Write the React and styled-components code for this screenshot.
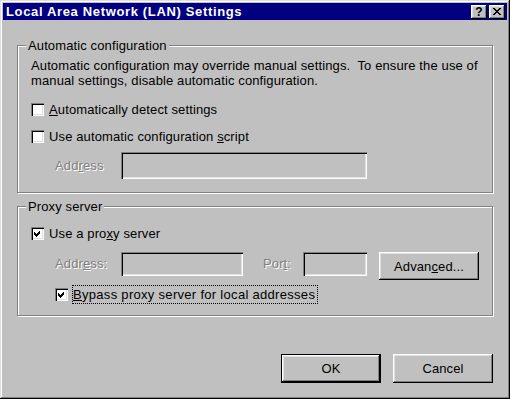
import React from "react";
import styled, { createGlobalStyle, css } from "styled-components";

const GlobalStyle = createGlobalStyle`
  html, body {
    margin: 0;
    padding: 0;
    background: #c0c0c0;
  }
  body {
    font-family: "Liberation Sans", Arial, sans-serif;
    font-size: 13px;
    letter-spacing: 0.12px;
    color: #000;
  }
`;

const raised = css`
  box-shadow: inset -1px -1px #000, inset 1px 1px #fff, inset -2px -2px #808080,
    inset 2px 2px #dfdfdf;
`;

const sunken = css`
  box-shadow: inset 1px 1px #808080, inset 2px 2px #000, inset -1px -1px #fff,
    inset -2px -2px #dfdfdf;
`;

const Dialog = () => {
  return (
    <>
      <GlobalStyle />
      <Window>
        <TitleBar>
          <Title>Local Area Network (LAN) Settings</Title>
          <TitleButtons>
            <TitleButton>
              <HelpGlyph>?</HelpGlyph>
            </TitleButton>
            <TitleButton>
              <svg width="8" height="7" viewBox="0 0 8 7" shapeRendering="crispEdges">
                <path d="M0 0h2l2 2.4 2-2.4h2l-3 3.5 3 3.5h-2l-2-2.4-2 2.4h-2l3-3.5z" fill="#000" />
              </svg>
            </TitleButton>
          </TitleButtons>
        </TitleBar>

        <Body>
          {/* 자동 구성 */}
          <Group $top={18}>
            <Legend>Automatic configuration</Legend>
            <GroupContent $top={5} $bottom={13}>
              <Desc>
                Automatic configuration may override manual settings.&nbsp; To ensure the use of
                <br />
                manual settings, disable automatic configuration.
              </Desc>
              <CheckRow $mt={13}>
                <CheckBox />
                <span>
                  <Key>A</Key>utomatically detect settings
                </span>
              </CheckRow>
              <CheckRow $mt={10}>
                <CheckBox />
                <span>
                  Use automatic configuration <Key>s</Key>cript
                </span>
              </CheckRow>
              <FieldRow $mt={7}>
                <FieldLabel $w={66} $h={27}>
                  Add<Key>r</Key>ess
                </FieldLabel>
                <TextBox $w={246} $h={27} />
              </FieldRow>
            </GroupContent>
          </Group>

          {/* 프록시 서버 */}
          <Group $top={6}>
            <Legend>Proxy server</Legend>
            <GroupContent $top={11} $bottom={11}>
              <CheckRow>
                <CheckBox $checked />
                <span>
                  Use a pro<Key>x</Key>y server
                </span>
              </CheckRow>
              <FieldRow $mt={10}>
                <FieldLabel $w={66} $h={24}>
                  Addr<Key>e</Key>ss:
                </FieldLabel>
                <TextBox $w={122} $h={24} />
                <FieldLabel $w={40} $h={24} $ml={20}>
                  Por<Key>t</Key>:
                </FieldLabel>
                <TextBox $w={64} $h={24} />
                <Button $ml={12} $h={28}>
                  Advan<Key>c</Key>ed...
                </Button>
              </FieldRow>
              <CheckRow $mt={5} $h={19} $indent={24} $gap={4}>
                <CheckBox $checked />
                <FocusLabel>
                  <Key>B</Key>ypass proxy server for local addresses
                </FocusLabel>
              </CheckRow>
            </GroupContent>
          </Group>

          <Footer>
            <Button $default $h={29}>OK</Button>
            <Button $h={29}>Cancel</Button>
          </Footer>
        </Body>
      </Window>
    </>
  );
};

const CheckBox = ({ $checked }) => (
  <Box>
    {$checked && (
      <svg width="13" height="13" viewBox="0 0 13 13" shapeRendering="crispEdges">
        <path d="M3 5L5 7L9 3V6L5 10L3 8Z" fill="#000" />
      </svg>
    )}
  </Box>
);

export default Dialog;

//창 전체
const Window = styled.div`
  width: 510px;
  height: 399px;
  box-sizing: border-box;
  padding: 3px;
  display: flex;
  flex-direction: column;
  background: #c0c0c0;
  box-shadow: inset -1px -1px #000, inset 1px 1px #dfdfdf, inset -2px -2px #808080,
    inset 2px 2px #fff;
`;

//제목 표시줄
const TitleBar = styled.div`
  height: 17px;
  display: flex;
  align-items: center;
  padding: 0 2px 0 3px;
  background: #000080;
  color: #fff;
`;

const Title = styled.div`
  flex: 1;
  font-weight: bold;
  font-size: 13px;
  letter-spacing: 0.65px;
  line-height: 17px;
  white-space: nowrap;
`;

const TitleButtons = styled.div`
  display: flex;
  gap: 2px;
`;

const TitleButton = styled.div`
  width: 16px;
  height: 14px;
  display: flex;
  align-items: center;
  justify-content: center;
  background: #c0c0c0;
  ${raised}
`;

const HelpGlyph = styled.span`
  color: #000;
  font-weight: bold;
  font-size: 12px;
  line-height: 14px;
`;

const Body = styled.div`
  display: flex;
  flex-direction: column;
  padding: 0 14px;
`;

//그룹 박스
const Group = styled.fieldset`
  margin: ${(p) => p.$top}px 0 0;
  padding: 0;
  min-width: 0;
  border: 1px solid #808080;
  box-shadow: 1px 1px 0 #fff, inset 1px 1px 0 #fff;
`;

const Legend = styled.legend`
  margin-left: 8px;
  padding: 0 2px;
  line-height: 15px;
  background: #c0c0c0;
`;

const GroupContent = styled.div`
  display: flex;
  flex-direction: column;
  padding: ${(p) => p.$top}px 13px ${(p) => p.$bottom}px;
`;

const Desc = styled.div`
  line-height: 15px;
  white-space: nowrap;
`;

const Key = styled.span`
  text-decoration: underline;
`;

const CheckRow = styled.div`
  display: flex;
  align-items: center;
  gap: ${(p) => p.$gap ?? 5}px;
  height: ${(p) => p.$h ?? 17}px;
  margin-top: ${(p) => p.$mt ?? 0}px;
  padding-left: ${(p) => p.$indent ?? 0}px;
  white-space: nowrap;
`;

const Box = styled.span`
  width: 13px;
  height: 13px;
  flex: none;
  display: flex;
  background: #fff;
  ${sunken}
`;

const FocusLabel = styled.span`
  border: 1px dotted #000;
  line-height: 17px;
  padding: 0 2px 0 0;
  letter-spacing: 0.3px;
`;

const FieldRow = styled.div`
  display: flex;
  align-items: flex-start;
  margin-top: ${(p) => p.$mt ?? 0}px;
  padding-left: 24px;
  white-space: nowrap;
`;

//비활성 라벨
const FieldLabel = styled.span`
  width: ${(p) => p.$w}px;
  margin-left: ${(p) => p.$ml ?? 0}px;
  line-height: ${(p) => p.$h}px;
  color: #808080;
  text-shadow: 1px 1px 0 #fff;
`;

const TextBox = styled.div`
  width: ${(p) => p.$w}px;
  height: ${(p) => p.$h}px;
  flex: none;
  background: #c0c0c0;
  ${sunken}
`;

//버튼
const Button = styled.button`
  width: 100px;
  height: ${(p) => p.$h}px;
  margin-left: ${(p) => p.$ml ?? 0}px;
  padding: 0;
  border: ${(p) => (p.$default ? "1px solid #000" : "none")};
  background: #c0c0c0;
  color: #000;
  font-family: "Liberation Sans", Arial, sans-serif;
  font-size: 13px;
  letter-spacing: 0.12px;
  ${raised}
`;

const Footer = styled.div`
  display: flex;
  justify-content: flex-end;
  gap: 12px;
  margin-top: 38px;
`;
